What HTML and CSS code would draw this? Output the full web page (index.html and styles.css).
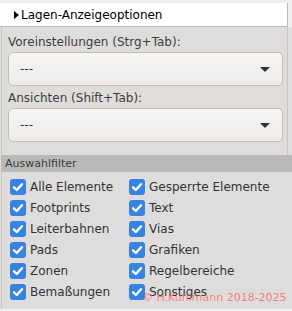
FILE: index.html
```html
<!DOCTYPE html>
<html lang="de">
<head>
  <meta charset="UTF-8" />
  <title>Lagen-Anzeigeoptionen</title>
  <link rel="stylesheet" href="styles.css">
</head>
<body>
  <div class="top">
    <div class="expander"><span class="tri"></span>Lagen-Anzeigeoptionen</div>
  </div>

  <div class="panel">
    <div class="label">Voreinstellungen (Strg+Tab):</div>
    <div class="combo"><span>---</span><span class="arrow"></span></div>
    <div class="label second">Ansichten (Shift+Tab):</div>
    <div class="combo"><span>---</span><span class="arrow"></span></div>
  </div>

  <div class="band">Auswahlfilter</div>

  <div class="filters">
    <label class="item"><span class="check"><svg viewBox="0 0 16 16"><path d="M4 8.3 L6.8 11 L12 5.2"/></svg></span>Alle Elemente</label>
    <label class="item"><span class="check"><svg viewBox="0 0 16 16"><path d="M4 8.3 L6.8 11 L12 5.2"/></svg></span>Gesperrte Elemente</label>
    <label class="item"><span class="check"><svg viewBox="0 0 16 16"><path d="M4 8.3 L6.8 11 L12 5.2"/></svg></span>Footprints</label>
    <label class="item"><span class="check"><svg viewBox="0 0 16 16"><path d="M4 8.3 L6.8 11 L12 5.2"/></svg></span>Text</label>
    <label class="item"><span class="check"><svg viewBox="0 0 16 16"><path d="M4 8.3 L6.8 11 L12 5.2"/></svg></span>Leiterbahnen</label>
    <label class="item"><span class="check"><svg viewBox="0 0 16 16"><path d="M4 8.3 L6.8 11 L12 5.2"/></svg></span>Vias</label>
    <label class="item"><span class="check"><svg viewBox="0 0 16 16"><path d="M4 8.3 L6.8 11 L12 5.2"/></svg></span>Pads</label>
    <label class="item"><span class="check"><svg viewBox="0 0 16 16"><path d="M4 8.3 L6.8 11 L12 5.2"/></svg></span>Grafiken</label>
    <label class="item"><span class="check"><svg viewBox="0 0 16 16"><path d="M4 8.3 L6.8 11 L12 5.2"/></svg></span>Zonen</label>
    <label class="item"><span class="check"><svg viewBox="0 0 16 16"><path d="M4 8.3 L6.8 11 L12 5.2"/></svg></span>Regelbereiche</label>
    <label class="item"><span class="check"><svg viewBox="0 0 16 16"><path d="M4 8.3 L6.8 11 L12 5.2"/></svg></span>Bemaßungen</label>
    <label class="item"><span class="check"><svg viewBox="0 0 16 16"><path d="M4 8.3 L6.8 11 L12 5.2"/></svg></span>Sonstiges</label>
  </div>
  <div class="foot"></div>

  <div class="watermark">© H.Kuhlmann 2018-2025</div>
</body>
</html>
```

FILE: styles.css
```css
html, body {
  margin: 0;
  padding: 0;
}
body {
  position: relative;
  width: 292px;
  height: 311px;
  overflow: hidden;
  font-family: 'DejaVu Sans', Verdana, sans-serif;
  font-size: 12px;
  color: #2e3436;
  background: #dfdddb;
}
.top {
  background: #efeeed;
  padding-top: 3px;
  padding-right: 4px;
}
.expander {
  display: flex;
  align-items: center;
  height: 23px;
  padding-left: 14px;
  background: #fff;
  color: #000;
  border-right: 1px solid #bdbab6;
  border-bottom: 1px solid #bdbab6;
}
.tri {
  width: 0;
  height: 0;
  margin-right: 2px;
  border-top: 4.5px solid transparent;
  border-bottom: 4.5px solid transparent;
  border-left: 5px solid #000;
}
.panel {
  margin: 0 4px 0 1px;
  padding: 7px 4px 13px 6px;
  border-left: 1px solid #c8c5c2;
  border-right: 1px solid #c8c5c2;
}
.label {
  height: 16px;
  line-height: 16px;
  margin-bottom: 2px;
  color: #3a3d3e;
}
.label.second {
  margin-top: 4px;
}
.combo {
  display: flex;
  align-items: center;
  justify-content: space-between;
  height: 32px;
  padding: 0 12px 0 11px;
  border: 1px solid #c0bcb8;
  border-radius: 5px;
  background: linear-gradient(#f6f5f4, #edebe9);
}
.arrow {
  width: 0;
  height: 0;
  border-left: 5px solid transparent;
  border-right: 5px solid transparent;
  border-top: 5px solid #2e3436;
}
.band {
  height: 17px;
  line-height: 17px;
  padding-left: 4px;
  margin-left: 1px;
  font-size: 11px;
  color: #3b3b3b;
  background: #bab9b7;
}
.filters {
  display: grid;
  grid-template-columns: 119px auto;
  row-gap: 5px;
  margin-left: 1px;
  padding: 7px 0 9px 8px;
  border-left: 1px solid #c8c5c2;
}
.item {
  display: flex;
  align-items: center;
  gap: 4px;
  height: 16px;
  white-space: nowrap;
}
.check {
  width: 16px;
  height: 16px;
  border-radius: 3px;
  background: #3584e4;
  flex: none;
}
.check svg {
  display: block;
  width: 16px;
  height: 16px;
}
.check path {
  fill: none;
  stroke: #fff;
  stroke-width: 2.4;
  stroke-linecap: round;
  stroke-linejoin: round;
}
.foot {
  height: 2px;
  background: #efeeed;
}
.watermark {
  position: absolute;
  left: 142px;
  top: 291px;
  font-size: 11px;
  color: rgba(255, 80, 80, 0.7);
  white-space: nowrap;
}
```
